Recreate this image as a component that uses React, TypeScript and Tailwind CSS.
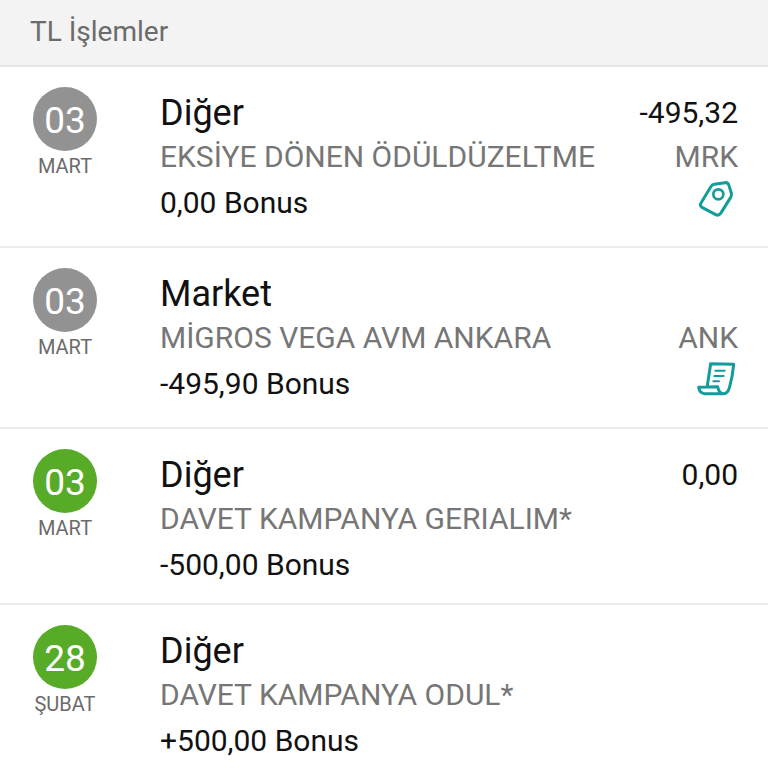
import clsx from "clsx";

type Transaction = {
  id: number;
  day: string;
  month: string;
  income?: boolean;
  title: string;
  description: string;
  bonus: string;
  amount?: string;
  city?: string;
  icon?: "tag" | "receipt";
};

const transactions: Transaction[] = [
  {
    id: 1,
    day: "03",
    month: "MART",
    title: "Diğer",
    description: "EKSİYE DÖNEN ÖDÜLDÜZELTME",
    bonus: "0,00 Bonus",
    amount: "-495,32",
    city: "MRK",
    icon: "tag",
  },
  {
    id: 2,
    day: "03",
    month: "MART",
    title: "Market",
    description: "MİGROS VEGA AVM ANKARA",
    bonus: "-495,90 Bonus",
    city: "ANK",
    icon: "receipt",
  },
  {
    id: 3,
    day: "03",
    month: "MART",
    income: true,
    title: "Diğer",
    description: "DAVET KAMPANYA GERIALIM*",
    bonus: "-500,00 Bonus",
    amount: "0,00",
  },
  {
    id: 4,
    day: "28",
    month: "ŞUBAT",
    income: true,
    title: "Diğer",
    description: "DAVET KAMPANYA ODUL*",
    bonus: "+500,00 Bonus",
  },
];

function TagIcon() {
  return (
    <svg className="size-10" viewBox="42 27 120 120" fill="none" stroke="#129c9c" strokeWidth="9" strokeLinejoin="round" aria-hidden="true">
      <path d="M91 43 L123 38 Q131 37 134 44 L142 69 Q144 76 140 82 L110 130 Q104 138 95 134 L54 112 Q46 107 51 99 L80 51 Q84 44 91 43 Z" />
      <circle cx="103" cy="73" r="15" strokeWidth="8" />
    </svg>
  );
}

function ReceiptIcon() {
  return (
    <svg className="size-10 overflow-visible" viewBox="42 30 120 120" fill="none" stroke="#129c9c" strokeWidth="9" strokeLinecap="round" strokeLinejoin="round" aria-hidden="true">
      <path d="M70 107 L80 41 L149 43 Q146 78 137 110 Q132 131 119 131 L62 131 Q46 129 44 112 L101 110 Q105 131 119 131" />
      <path strokeWidth="6" d="M94 62 H122 M91 78 H119 M88 94 H105" />
    </svg>
  );
}

function TransactionRow({ transaction }: { transaction: Transaction }) {
  return (
    <li className="flex items-start border-b-2 border-[#ebebeb] pr-[30px] pb-[14px] last:border-b-0 last:pb-0">
      <div className="flex w-[130px] shrink-0 flex-col items-center pt-5">
        <div className={clsx(
          "flex size-16 items-center justify-center rounded-full pt-1 text-[37px] leading-[44px] text-white",
          transaction.income ? "bg-[#57ab27]" : "bg-[#929292]"
        )}>
          {transaction.day}
        </div>
        <p className="text-[20px] leading-[30px] text-[#6b6b6b]">{transaction.month}</p>
      </div>

      <div className="min-w-0 flex-1 pt-6 pl-[30px]">
        <h2 className="text-[36px] leading-[44px]">{transaction.title}</h2>
        <p className="text-[30px] leading-[44px] text-[#767676]">{transaction.description}</p>
        <p className="text-[30px] leading-[48px]">{transaction.bonus}</p>
      </div>

      <div className="flex shrink-0 flex-col items-end pt-6 text-[30px] leading-[44px]">
        <p className="min-h-11">{transaction.amount}</p>
        {transaction.city && (
          <p className="text-[#767676]">{transaction.city}</p>
        )}
        {transaction.icon && (
          <div className="h-[53px]">
            {transaction.icon === "tag" ? <TagIcon /> : <ReceiptIcon />}
          </div>
        )}
      </div>
    </li>
  );
}

export default function App() {
  return (
    <main className="min-h-screen w-full bg-white font-[Roboto,sans-serif] text-[#111111]">
      <header className="border-b-2 border-[#e6e6e6] bg-[#f3f3f3] px-[30px] pt-[10px] pb-[11px]">
        <h1 className="text-[28px] leading-[44px] text-[#6b6b6b]">TL İşlemler</h1>
      </header>

      <ul>
        {transactions.map(transaction => (
          <TransactionRow key={transaction.id} transaction={transaction} />
        ))}
      </ul>
    </main>
  );
}
